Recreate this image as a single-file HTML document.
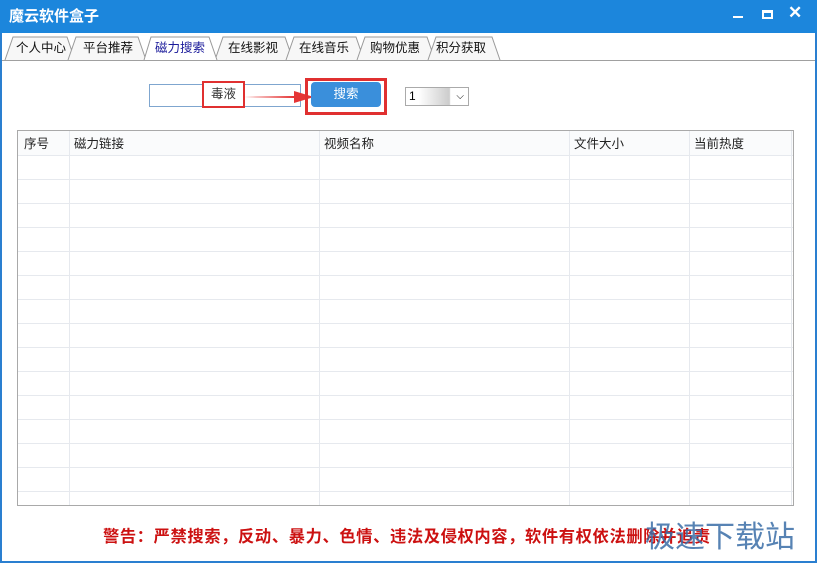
<!DOCTYPE html>
<html><head><meta charset="utf-8"><style>
*{margin:0;padding:0;box-sizing:border-box}
body{width:817px;height:563px;overflow:hidden;background:#fff;font-family:"Liberation Sans","Noto Sans CJK SC",sans-serif;font-size:12px;position:relative}
.title{position:absolute;left:0;top:0;width:817px;height:33px;background:#1c86dc;color:#fff;font-weight:bold;font-size:15px;line-height:33px;padding-left:9px}
.bl{position:absolute;left:0;top:33px;width:2px;height:530px;background:#2a7fd0}
.br{position:absolute;right:0;top:33px;width:2px;height:530px;background:#2a7fd0}
.bb{position:absolute;left:0;bottom:0;width:817px;height:2px;background:#2a7fd0}
.tab{position:absolute;top:37px;height:23px;line-height:23px;font-size:12.5px;color:#111;text-align:center}
.tabline{position:absolute;left:2px;top:60px;width:813px;height:1px;background:#a0a0a0}
.ctl{position:absolute}
.frame{position:absolute;left:17px;top:130px;width:777px;height:376px;border:1px solid #a9a9a9;overflow:hidden}
.h{position:absolute;left:0;width:775px;height:1px;background:#e6e9ee}
.v{position:absolute;top:0;width:1px;height:374px;background:#e6e9ee}
.hd{position:absolute;top:0;height:24px;line-height:26px;font-size:12.5px;color:#222}
.warn{position:absolute;left:103px;top:523px;color:#cc1111;font-weight:bold;font-size:16.3px;font-family:"Liberation Sans","Noto Sans CJK SC",sans-serif;letter-spacing:0.6px}
.wm{position:absolute;left:645px;top:512px;color:#3a6ea8;font-size:30px;opacity:.85;font-family:"Noto Sans CJK SC",sans-serif}
</style></head><body>
<div class="title">魔云软件盒子</div>
<div style="position:absolute;left:733px;top:16px;width:10px;height:2px;background:#fff"></div>
<div style="position:absolute;left:762px;top:10px;width:11px;height:9px;border:2px solid #fff;border-top-width:3px"></div>
<div style="position:absolute;left:788px;top:3px;color:#fff;font-size:17px;font-weight:bold">✕</div>
<div class="bl"></div><div class="br"></div><div class="bb"></div>
<svg style="position:absolute;left:0;top:36px" width="510" height="26">
<g fill="#f7f7f7" stroke="#999" stroke-width="1">
<path d="M5,24 L13,1 H67 L75,24"/>
<path d="M68,24 L76,1 H138 L146,24"/>
<path d="M215,24 L223,1 H285 L293,24"/>
<path d="M286,24 L294,1 H356 L364,24"/>
<path d="M357,24 L365,1 H427 L435,24"/>
<path d="M428,24 L436,1 H492 L500,24"/>
<path d="M144,24 L151,1 H209 L217,24" fill="#fff"/>
</g></svg>
<div class="tabline"></div>
<div class="tab" style="left:13px;width:56px">个人中心</div>
<div class="tab" style="left:78px;width:60px">平台推荐</div>
<div class="tab" style="left:151px;width:58px;color:#1a1a9a">磁力搜索</div>
<div class="tab" style="left:223px;width:60px">在线影视</div>
<div class="tab" style="left:294px;width:60px">在线音乐</div>
<div class="tab" style="left:365px;width:60px">购物优惠</div>
<div class="tab" style="left:434px;width:54px">积分获取</div>
<div class="ctl" style="left:149px;top:84px;width:152px;height:23px;border:1px solid #7fa6cf"></div>
<div class="ctl" style="left:202px;top:81px;width:43px;height:27px;border:2px solid #e03030;background:#fff;text-align:center;line-height:23px;font-size:12.5px;color:#333">毒液</div>
<svg class="ctl" style="left:244px;top:87px" width="72" height="20"><path d="M0,10 L50,9 L50,4 L70,10 L50,16 L50,11 Z" fill="#e53535"/></svg>
<div class="ctl" style="left:305px;top:78px;width:82px;height:37px;border:3px solid #e03030"></div>
<div class="ctl" style="left:311px;top:82px;width:70px;height:25px;background:#3a8fdb;border-radius:4px;color:#fff;text-align:center;line-height:25px;font-size:12.5px">搜索</div>
<div class="ctl" style="left:405px;top:87px;width:64px;height:19px;border:1px solid #aaa;background:linear-gradient(90deg,#fff 20%,#ccc 70%,#fff 72%);font-size:12px;line-height:17px;padding-left:3px">1<span style="position:absolute;right:4px;top:0;font-size:10px">⌵</span></div>
<div class="frame">
<div style="position:absolute;left:0;top:0;width:775px;height:24px;background:#fafbfc"></div>
<div class="h" style="top:24px"></div><div class="h" style="top:48px"></div><div class="h" style="top:72px"></div><div class="h" style="top:96px"></div><div class="h" style="top:120px"></div><div class="h" style="top:144px"></div><div class="h" style="top:168px"></div><div class="h" style="top:192px"></div><div class="h" style="top:216px"></div><div class="h" style="top:240px"></div><div class="h" style="top:264px"></div><div class="h" style="top:288px"></div><div class="h" style="top:312px"></div><div class="h" style="top:336px"></div><div class="h" style="top:360px"></div>
<div class="v" style="left:51px"></div><div class="v" style="left:301px"></div><div class="v" style="left:551px"></div><div class="v" style="left:671px"></div><div class="v" style="left:773px"></div>
<div class="hd" style="left:6px">序号</div><div class="hd" style="left:56px">磁力链接</div><div class="hd" style="left:306px">视频名称</div><div class="hd" style="left:556px">文件大小</div><div class="hd" style="left:676px">当前热度</div>
</div>
<div class="warn">警告：严禁搜索，反动、暴力、色情、违法及侵权内容，软件有权依法删除并追责</div>
<div class="wm">极速下载站</div>
</body></html>
